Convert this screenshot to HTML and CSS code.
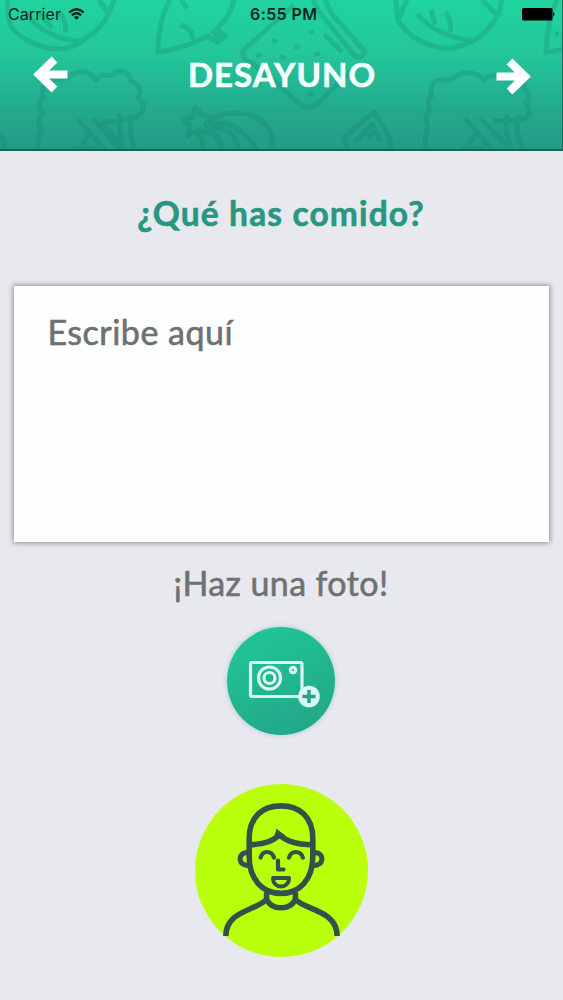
FILE: index.html
```html
<!DOCTYPE html>
<html lang="es">
<head>
<meta charset="utf-8">
<title>Desayuno</title>
<link rel="stylesheet" href="styles.css">
</head>
<body>
<div class="screen">
  <header class="header">
    <svg class="pattern" viewBox="0 0 563 149" aria-hidden="true">
      <!-- cabbages -->
      <path d="M8 0C7 12 8 20 12 28C22 40 42 50 62 49C72 48 80 43 86 38C98 32 108 18 114 0M26 14C38 28 53 40 82 41M38 12L52 28M58 12C65 18 67 26 65 32M99 0L108 13"/>
      <path d="M396 0L398 20C408 38 432 50 452 48C464 46 480 39 488 29C496 20 502 9 501 0M407 0L398 20M417 14C428 27 448 38 472 41M431 10L435 24M445 12C451 18 451 26 450 32M482 0L496 14"/>
      <!-- fish -->
      <path d="M170 0C162 14 158 34 158 52C178 50 195 43 207 36L218 42L225 36L217 29C226 20 232 10 234 0M180 25C190 28 194 33 192 40M187 8L181 0M212 30L221 40"/>
      <path d="M557 0C550 14 547 34 546 52L563 50M555 34h4"/>
      <!-- broccoli -->
      <path d="M39 150C37 143 38 136 42 130C37 125 38 118 43 113C38 108 38 101 44 97C41 91 43 85 49 81C58 77 66 80 69 77C77 69 89 70 96 80C102 72 108 77 112 75C119 69 129 71 131 81C140 84 142 92 138 98C146 103 144 111 139 115C132 121 122 117 119 122L101 121M78 119L105 150M92 118L121 150M119 114L120 130L122 150M132 114C129 128 131 139 135 150M92 131L83 143L83 150M101 121L119 142M73 148h25"/>
      <path d="M425 150C426 140 424 132 428 127C425 120 426 114 430 110C427 104 428 98 432 95C429 86 433 80 442 80L452 80C460 70 477 71 484 80C491 74 500 73 507 79C517 76 526 80 524 88C531 94 528 99 526 103C533 111 529 116 523 119L493 121M465 118L492 150M480 118L511 150M507 114L506 131L511 150M519 114C515 126 518 139 523 150M478 130L470 143V150M460 148h25"/>
      <!-- toast on a spatula -->
      <path d="M266 30L243 51C242 56 245 61 251 62L300 104Q308 111 317 104L355 68M266 30L294 5M318 10L354 55Q360 60 365 52L332 14L325 0M318 10L313 0M324 34L342 52"/>
      <path d="M274 41h1M296 47h1M311 32h1M258 55h1M317 54h1M310 94h1M282 57h1" class="dots"/>
      <!-- onion -->
      <path d="M195 107L202 115L212 117L206 124L208 133L199 129L188 136L190 126L183 119L193 117ZM206 124C223 108 256 109 270 130Q274 139 271 150M211 126Q232 114 257 150M207 130Q231 120 239 150M202 132Q218 129 222 150M197 133Q204 138 203 150"/>
      <!-- pepper wedge -->
      <path d="M343 138L374 112L388 135Q392 142 390 150M349 150L343 138M355 142L372 124L380 141M367 137L377 130M373 112L377 117"/>
      <path d="M0 134Q5 139 4 150"/>
    </svg>
    <div class="status">
      <span class="carrier">Carrier</span>
      <svg class="wifi" viewBox="0 0 17 13"><path d="M1.200 4.500Q8.500-2.100 15.800 4.500M3.800 7.300Q8.500 3.200 13.200 7.300"/><path class="solid" d="M5.800 9.200Q8.500 7 11.200 9.200L8.500 12Z"/></svg>
      <span class="time">6:55 PM</span>
      <svg class="battery" viewBox="0 0 33 13"><rect width="30.500" height="12.500" rx="1.500"/><path d="M31.200 4Q33.500 6.200 31.200 8.500Z"/></svg>
    </div>
    <nav class="nav">
      <svg class="arrow" viewBox="0 0 36 38"><path d="M21.500 3.500L6 18.500L21.500 33.500M6 18.500H34.500"/></svg>
      <h1 class="title">DESAYUNO</h1>
      <svg class="arrow next" viewBox="0 0 36 38"><path d="M14.500 3.500L30 18.500L14.500 33.500M30 18.500H1.500"/></svg>
    </nav>
  </header>
  <main class="content">
    <h2 class="question">¿Qué has comido?</h2>
    <div class="entry"><span class="placeholder">Escribe aquí</span></div>
    <p class="photo-label">¡Haz una foto!</p>
    <div class="camera">
      <svg viewBox="0 0 108 108">
        <rect x="23.500" y="35.500" width="51.500" height="34" rx="1.500"/>
        <circle cx="42.500" cy="51" r="11"/><circle cx="42.500" cy="51" r="5.500"/><circle cx="66" cy="43" r="2.700"/>
        <circle class="badge" cx="82" cy="69.500" r="10.800"/><path class="plus" d="M82 63V76M75.500 69.500H88.500"/>
      </svg>
    </div>
    <div class="avatar">
      <svg viewBox="0 0 174 174">
        <path d="M54.500 64V55C54.500 33 68 22 86.500 22S118.500 33 118.500 55V73C118.500 96 105 110 86.500 110S54.500 96 54.500 73Z"/>
        <path d="M55 61Q76 61 85 51Q95 61 118 61"/>
        <path class="ear" d="M55 69C42 67 42 84 56 82M118 69C131 67 131 84 117 82"/>
        <path class="feature" d="M66 74C68 66.500 77 66.500 79.500 74M94.500 74C97 66.500 106 66.500 108.500 74M83.500 77V86H89"/>
        <path class="mouth" d="M78.500 94.500H94.500C95 106 78 106 78.500 94.500Z"/>
        <path d="M72 109V116Q76 124.500 86.500 124.500T101 116V109M72 116C63 127 31 127 31 153M101 116C111 127 143 127 143 153"/>
        <path class="solid" d="M82 45L91 52L86 55L79 55Z"/>
      </svg>
    </div>
  </main>
</div>
</body>
</html>
```
FILE: styles.css
```css
* { box-sizing: border-box; }
body { margin: 0; background: #e7e9ee; font-family: Lato, "Open Sans", sans-serif; }
.screen { width: 563px; height: 1000px; overflow: hidden; background: #e7e9ee; }
.header { position: relative; height: 151px; border-bottom: 2px solid #205f55; border-right: 1px solid #176c5c; background: linear-gradient(#20d49f, #23c79b 35%, #23a98c 75%, #239c86); }
.pattern { position: absolute; left: 0; top: 0; width: 563px; height: 149px; fill: none; stroke: #157d69; stroke-opacity: .25; stroke-width: 5; stroke-linejoin: round; }
.pattern .dots { stroke-linecap: round; }
.status { position: relative; display: grid; grid-template-columns: 60px 190px 1fr 33px; align-items: center; height: 29px; padding: 0 7px 0 8px; font: 16px/29px Inter, sans-serif; color: #07271f; }
.carrier { letter-spacing: .1px; }
.wifi { width: 17px; height: 13px; fill: none; stroke: #07271f; stroke-width: 2.3; }
.wifi .solid { fill: #07271f; stroke: none; }
.time { font-weight: 600; font-size: 16px; letter-spacing: .4px; margin-left: -8px; }
.battery { width: 33px; height: 13px; fill: #000; }
.nav { position: relative; display: flex; justify-content: space-between; align-items: center; height: 92px; padding: 0 31px 0 33px; }
.arrow { width: 36px; height: 38px; fill: none; stroke: #fff; stroke-width: 8.2; }
.next { margin-top: 3px; }
.title { margin: -2px 0 0; font-size: 33px; line-height: 40px; font-weight: 700; letter-spacing: 1px; color: #f5fffd; -webkit-text-stroke: .6px #f5fffd; }
.content { display: flex; flex-direction: column; align-items: center; padding: 42px 14px 0 13px; }
.question { margin: 0; font-size: 33.500px; line-height: 40px; font-weight: 700; letter-spacing: 1.150px; color: #279782; -webkit-text-stroke: .6px #279782; }
.entry { width: 535px; height: 256px; margin-top: 53px; padding: 26px 34px; background: #fdfefe; box-shadow: 0 0 5px 1px #8b8e92; }
.placeholder { font-size: 34px; line-height: 40px; letter-spacing: .5px; color: #6e7071; -webkit-text-stroke: .6px #6e7071; }
.photo-label { margin: 21px 0 0; font-size: 34px; line-height: 40px; letter-spacing: .4px; color: #6f7173; -webkit-text-stroke: .6px #6f7173; }
.camera { width: 108px; height: 108px; margin-top: 24px; border-radius: 50%; background: linear-gradient(155deg, #20c997, #22a387); box-shadow: 0 0 4px 1px #b9d3d0; }
.camera svg { display: block; fill: none; stroke: #daf5ef; stroke-width: 3.2; }
.camera .badge { fill: #daf5ef; stroke: none; }
.camera .plus { stroke: #23a387; stroke-width: 3.5; }
.avatar { width: 173px; height: 173px; margin-top: 49px; border-radius: 50%; background: #baff0c; }
.avatar svg { display: block; fill: none; stroke: #345149; stroke-width: 5.6; stroke-linejoin: round; }
.avatar .ear { stroke-width: 5; }
.avatar .feature { stroke-width: 4.2; stroke-linecap: round; }
.avatar .mouth { stroke-width: 4; }
.avatar .solid { fill: #345149; stroke: none; }
```
